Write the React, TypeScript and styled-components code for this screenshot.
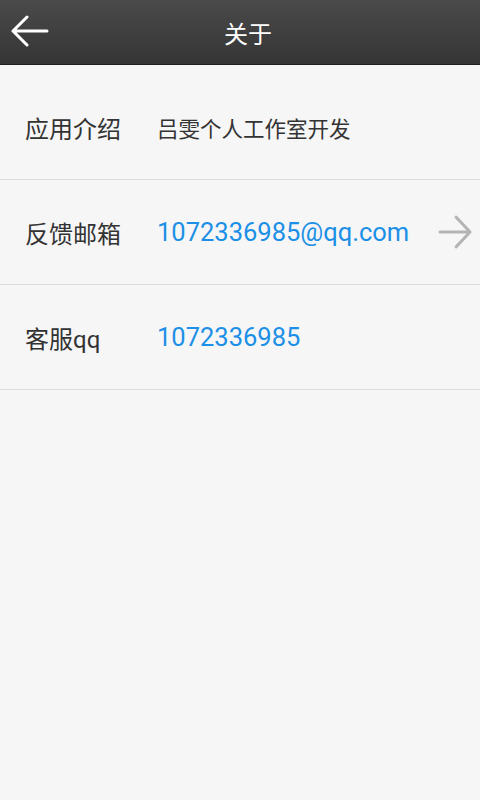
import { FC } from 'react';
import styled, { createGlobalStyle } from 'styled-components';

const GlobalStyle = createGlobalStyle`
    * {
        box-sizing: border-box;
    }
    body {
        margin: 0;
        background: #f6f6f6;
        font-family: Roboto, "Noto Sans CJK SC", sans-serif;
    }
`;

// - - - - - - STYLED-COMPONENTS

const Page = styled.div`
    width: 480px;
    min-height: 800px;
    background: #f6f6f6;
`;

const Header = styled.header`
    height: 65px;
    display: grid;
    grid-template-columns: 65px 1fr 49px;
    align-items: center;
    background: linear-gradient(#4a4a4a, #353535);
    border-bottom: 1px solid #1e1e1e;
`;

const BackButton = styled.button`
    border: none;
    background: none;
    padding: 0 0 0 10px;
    height: 100%;
    display: flex;
    align-items: center;
`;

const Title = styled.h1`
    margin: 0;
    text-align: center;
    color: #fff;
    font-size: 24px;
    font-weight: 400;
    font-family: "Noto Sans CJK SC", sans-serif;
`;

const List = styled.div`
    padding-top: 10px;
`;

const Row = styled.div`
    height: 105px;
    display: flex;
    align-items: center;
    padding-left: 25px;
    border-bottom: 1px solid #dcdcdc;
`;

const Label = styled.span`
    width: 132px;
    flex-shrink: 0;
    color: #333;
    font-size: 24px;
    font-family: Roboto, "Noto Sans CJK SC", sans-serif;
`;

const Value = styled.span<{ $link?: boolean }>`
    flex: 1;
    color: ${(p) => (p.$link ? '#1c8fe6' : '#333')};
    font-size: ${(p) => (p.$link ? '25.5px' : '21.5px')};
    font-family: Roboto, "Noto Sans CJK SC", sans-serif;
`;

const Chevron = styled.span`
    width: 42px;
    display: flex;
    align-items: center;
`;

// - - - - - - - - - - - - - - -

const App: FC = () => {
    return (
        <Page>
            <GlobalStyle />
            <Header>
                <BackButton aria-label="back">
                    <svg width="40" height="34" viewBox="0 0 40 34">
                        <path
                            d="M3 16 H37 M17 2 L3 16 L17 30"
                            stroke="#fff"
                            strokeWidth="3"
                            fill="none"
                            strokeLinecap="round"
                            strokeLinejoin="round"
                        />
                    </svg>
                </BackButton>
                <Title>关于</Title>
                <div />
            </Header>
            <List>
                <Row>
                    <Label>应用介绍</Label>
                    <Value>吕雯个人工作室开发</Value>
                </Row>
                <Row>
                    <Label>反馈邮箱</Label>
                    <Value $link>1072336985@qq.com</Value>
                    <Chevron>
                        <svg width="36" height="38" viewBox="0 0 36 38">
                            <path
                                d="M2 19 H32 M18 4 L32 19 L18 34"
                                stroke="#b4b4b4"
                                strokeWidth="3"
                                fill="none"
                                strokeLinecap="round"
                                strokeLinejoin="round"
                            />
                        </svg>
                    </Chevron>
                </Row>
                <Row>
                    <Label>客服qq</Label>
                    <Value $link>1072336985</Value>
                </Row>
            </List>
        </Page>
    );
};

export default App;
